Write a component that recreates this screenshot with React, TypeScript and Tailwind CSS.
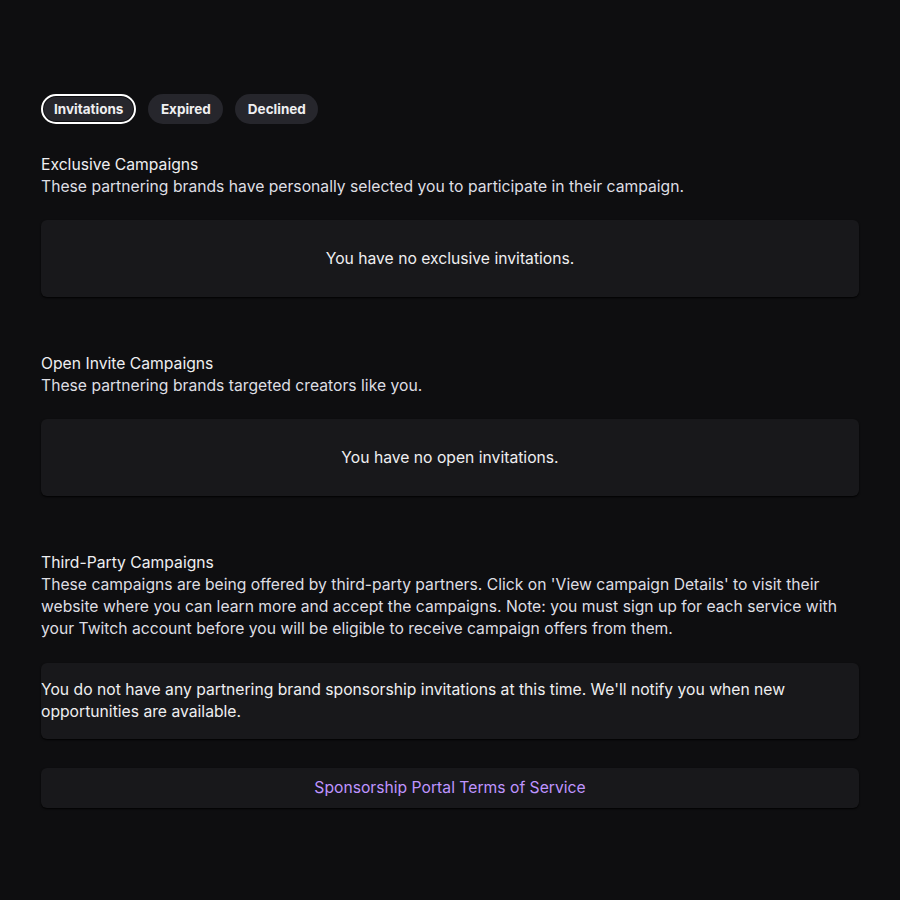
import { ReactNode } from 'react';

const tabs = ['Invitations', 'Expired', 'Declined'];

const Card = ({ children, className = '' }: { children: ReactNode; className?: string }) => (
  <div className={`rounded-md bg-[#18181b] shadow-[0_1px_2px_rgba(0,0,0,0.9)] ${className}`}>{children}</div>
);

const Section = ({ title, description, children }: { title: string; description: string; children: ReactNode }) => (
  <section className="mb-[56px]">
    <h2 className="text-[15.7px] leading-[22px] text-[#efeff1]">{title}</h2>
    <p className="mb-[22px] text-[15.7px] leading-[22px] text-[#dedee3]">{description}</p>
    {children}
  </section>
);

const App = () => {
  return (
    <div
      className="min-h-[900px] bg-[#0e0e10] px-[41px] pt-[94px] text-[#efeff1]"
      style={{ fontFamily: 'Inter, "Noto Sans", sans-serif' }}
    >
      {/* Tab pills */}
      <div className="mb-[30px] flex gap-3">
        {tabs.map((tab, i) => (
          <button
            key={tab}
            className={`flex h-[30px] items-center rounded-full bg-[#26262c] text-[13.5px] font-bold text-[#efeff1] ${
              i === 0 ? 'border-2 border-white px-[11px] shadow-[inset_0_0_0_1px_#0e0e10]' : 'px-[12.5px]'
            }`}
          >
            {tab}
          </button>
        ))}
      </div>

      <Section
        title="Exclusive Campaigns"
        description="These partnering brands have personally selected you to participate in their campaign."
      >
        <Card className="flex h-[77px] items-center justify-center text-[15.7px]">You have no exclusive invitations.</Card>
      </Section>

      <Section title="Open Invite Campaigns" description="These partnering brands targeted creators like you.">
        <Card className="flex h-[77px] items-center justify-center text-[15.7px]">You have no open invitations.</Card>
      </Section>

      <section>
        <h2 className="text-[15.7px] leading-[22px] text-[#efeff1]">Third-Party Campaigns</h2>
        <p className="mb-[23px] text-[15.7px] leading-[22px] text-[#dedee3]">
          These campaigns are being offered by third-party partners. Click on 'View campaign Details' to visit their
          website where you can learn more and accept the campaigns. Note: you must sign up for each service with your
          Twitch account before you will be eligible to receive campaign offers from them.
        </p>
        <Card className="flex h-[76px] items-center text-[15.7px] leading-[22px]">
          <p>
            You do not have any partnering brand sponsorship invitations at this time. We'll notify you when new
            opportunities are available.
          </p>
        </Card>
        <Card className="mt-[29px] flex h-[40px] items-center justify-center">
          <a href="#" className="text-[15.7px] text-[#bf94ff]">
            Sponsorship Portal Terms of Service
          </a>
        </Card>
      </section>
    </div>
  );
};

export default App;
